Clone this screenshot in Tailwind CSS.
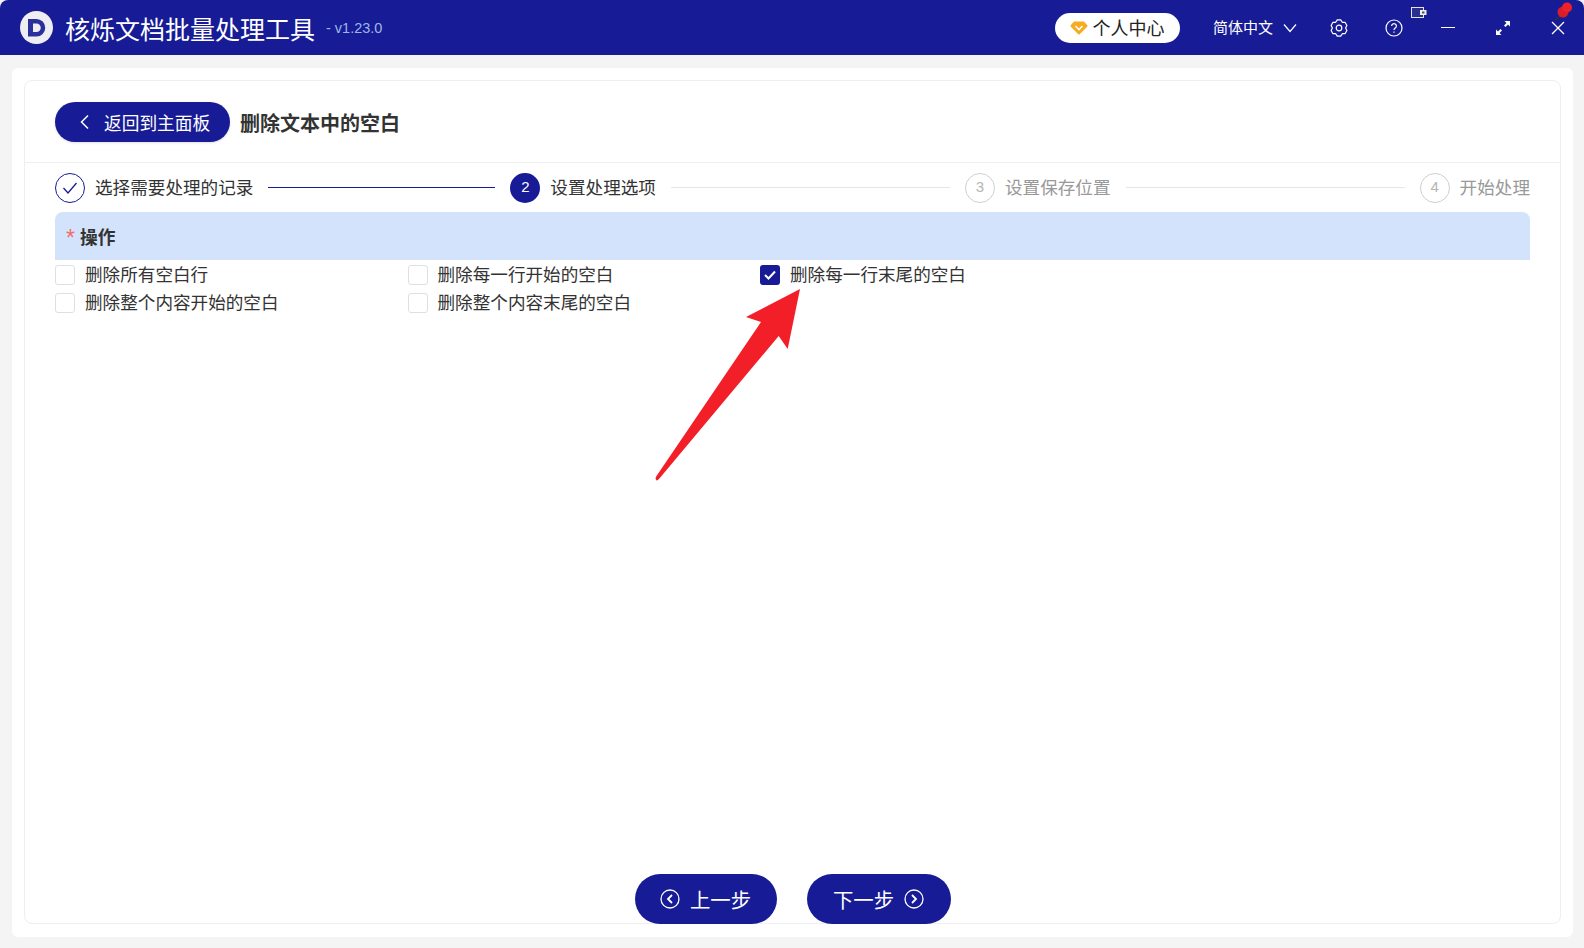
<!DOCTYPE html>
<html lang="zh-CN">
<head>
    <meta charset="UTF-8">
    <title>核烁文档批量处理工具</title>
    <script src="https://cdn.jsdelivr.net/npm/@tailwindcss/browser@4"></script>
</head>
<body class="bg-[#f4f4f4] font-['Noto_Sans_CJK_SC','Noto_Sans',sans-serif] text-[#333]">
<div class="relative flex flex-col w-[1584px] h-[948px] overflow-hidden">
    <!-- title bar -->
    <header class="flex items-center h-[55px] shrink-0 bg-[#171c96] text-white pl-[20px] rounded-tl-lg rounded-tr-lg">
        <svg class="w-[33px] h-[33px] mr-[12px]" viewBox="0 0 33 33">
            <circle cx="16.5" cy="16.5" r="16.500" fill="#eeeef2"/>
            <path d="M8 8h8.500a8.700 8.700 0 0 1 0 17.500H8z" fill="#2a2f9c"/>
            <path d="M13 12.500h3.500a4.200 4.200 0 0 1 0 8.500H13z" fill="#eeeef2"/>
        </svg>
        <span class="text-[25px] leading-none mt-[1px]">核烁文档批量处理工具</span>
        <span class="ml-[11px] mt-[3px] text-[14.500px] text-[#9db8e6] font-['Liberation_Sans',sans-serif]">- v1.23.0</span>
        <div class="flex items-center ml-auto">
            <button class="flex items-center justify-center w-[125px] h-[30px] mr-[33px] rounded-full bg-white text-[#222] text-[18px]">
                <svg class="w-[18px] h-[14px] mr-[4px]" viewBox="0 0 18 14"><path d="M4.500 1.500h9l3 3.500L9 12.500 1.500 5z" fill="#f7ab1e" stroke="#f7ab1e" stroke-width="2" stroke-linejoin="round"/><path d="M5.500 5L9 8.500 12.500 5" fill="none" stroke="#fff" stroke-width="1.600"/></svg>
                个人中心
            </button>
            <span class="text-[15px]">简体中文</span>
            <svg class="w-[14px] h-[10px] ml-[10px] mr-[33px]" viewBox="0 0 14 10" fill="none" stroke="#fff" stroke-width="1.200"><path d="M1 1.500l6 7 6-7"/></svg>
            <svg class="w-[18px] h-[18px] mr-[37px]" viewBox="0 0 18 18" fill="none" stroke="#fff" stroke-width="1.200" stroke-linejoin="round"><path d="M7.270 .88L10.730 .88 12.300 3.280 15.170 3.450 16.890 6.440 15.600 9 16.890 11.560 15.170 14.550 12.300 14.720 10.730 17.120 7.270 17.120 5.700 14.720 2.830 14.550 1.110 11.560 2.400 9 1.110 6.440 2.830 3.450 5.700 3.280z"/><circle cx="9" cy="9" r="2.800"/></svg>
            <svg class="w-[18px] h-[18px] mr-[38px]" viewBox="0 0 18 18" fill="none" stroke="#fff" stroke-width="1.200"><circle cx="9" cy="9" r="8"/><path d="M6.600 7a2.400 2.400 0 1 1 3.600 2.100c-.8.500-1.200 1-1.200 1.900"/><path d="M9 12.600v1.200"/></svg>
            <span class="w-[14px] h-[1.500px] bg-white mr-[41px]"></span>
            <svg class="w-[14px] h-[14px] mr-[41px]" viewBox="0 0 14 14" fill="#fff"><path d="M8.500 0H14v5.500L12 3.500 9.500 6 8 4.500 10.500 2zM5.500 14H0V8.500L2 10.500 4.500 8 6 9.500 3.500 12z"/></svg>
            <svg class="w-[14px] h-[14px] mr-[19px]" viewBox="0 0 14 14" fill="none" stroke="#fff" stroke-width="1.300"><path d="M1 1l12 12M13 1L1 13"/></svg>
        </div>
    </header>

    <!-- small tray icons over the title bar -->
    <svg class="absolute left-[1411px] top-[7px] w-[16px] h-[11px]" viewBox="0 0 16 11"><rect x=".5" y=".5" width="12" height="10" fill="#2a2f8f" stroke="#e4e4e4"/><rect x="9" y="3" width="6.500" height="5" fill="#eee"/><rect x="11" y="4.500" width="2.500" height="2" fill="#555"/></svg>
    <svg class="absolute left-[1554px] top-[2px] w-[20px] h-[20px]" viewBox="0 0 20 20"><path d="M1 18l5-4" stroke="#333" stroke-width="1.500"/><circle cx="9" cy="10" r="5.500" fill="#d81e28"/><circle cx="13" cy="5.500" r="5" fill="#f0202a"/></svg>

    <!-- main -->
    <main class="flex flex-col flex-1 mt-[13px] ml-[12px] mr-[11px] mb-[11px] bg-white rounded-md p-[12px] pb-[13px]">
        <div class="relative flex flex-col flex-1 border border-[#efefef] rounded-lg">
            <div class="flex items-center h-[82px] shrink-0 pl-[30px] pt-[1px] border-b border-[#efefef]">
                <button class="flex items-center w-[175px] h-[40px] rounded-full bg-[#171c96] text-white text-[17.700px] pl-[24px] shadow-sm">
                    <svg class="w-[11px] h-[16px] mr-[14px]" viewBox="0 0 11 16" fill="none" stroke="#fff" stroke-width="1.500"><path d="M9 1.500L2.500 8 9 14.500"/></svg>
                    返回到主面板
                </button>
                <h1 class="ml-[10px] mt-[1px] text-[20px] font-bold text-[#333]">删除文本中的空白</h1>
            </div>

            <div class="flex flex-col flex-1 px-[30px]">
                <!-- steps -->
                <div class="flex items-center h-[49px] shrink-0 text-[17.600px]">
                    <span class="flex items-center justify-center w-[30px] h-[30px] rounded-full border border-[#171c96] shrink-0">
                        <svg class="w-[16px] h-[14px]" viewBox="0 0 16 14" fill="none" stroke="#171c96" stroke-width="1.300"><path d="M1.500 7l4.500 5L14.500 2"/></svg>
                    </span>
                    <span class="ml-[10px] mb-[1px] text-[#333] whitespace-nowrap">选择需要处理的记录</span>
                    <span class="h-px w-[227px] ml-[15px] mr-[15px] bg-[#171c96]"></span>
                    <span class="flex items-center justify-center w-[30px] h-[30px] rounded-full bg-[#171c96] text-white text-[15px] shrink-0 font-['Liberation_Sans',sans-serif]">2</span>
                    <span class="ml-[10px] mb-[1px] text-[#333] whitespace-nowrap">设置处理选项</span>
                    <span class="h-px flex-1 ml-[15px] mr-[15px] bg-[#e6e6e6]"></span>
                    <span class="flex items-center justify-center w-[30px] h-[30px] rounded-full border border-[#cfcfcf] text-[#b5b5b5] text-[15px] shrink-0 font-['Liberation_Sans',sans-serif]">3</span>
                    <span class="ml-[10px] mb-[1px] text-[#999] whitespace-nowrap">设置保存位置</span>
                    <span class="h-px flex-1 ml-[15px] mr-[15px] bg-[#e6e6e6]"></span>
                    <span class="flex items-center justify-center w-[30px] h-[30px] rounded-full border border-[#cfcfcf] text-[#b5b5b5] text-[15px] shrink-0 font-['Liberation_Sans',sans-serif]">4</span>
                    <span class="ml-[10px] mb-[1px] text-[#999] whitespace-nowrap">开始处理</span>
                </div>

                <!-- options -->
                <div class="flex items-center h-[48px] shrink-0 bg-[#d3e3fc] rounded-t-lg pl-[11px] text-[17.700px] font-bold text-[#333]">
                    <span class="text-[#f56c6c] text-[23px] font-normal font-['Liberation_Sans',sans-serif] mt-[5px] mr-[5px]">*</span><span class="mt-[1px]">操作</span>
                </div>
                <div class="grid grid-cols-[352.500px_352.500px_1fr] auto-rows-[28px] mt-[1px] text-[17.600px] text-[#333]">
                    <label class="flex items-center"><span class="w-[20px] h-[20px] mr-[10px] border border-[#dcdfe6] rounded-[3px]"></span><span class="mb-[2px]">删除所有空白行</span></label>
                    <label class="flex items-center"><span class="w-[20px] h-[20px] mr-[10px] border border-[#dcdfe6] rounded-[3px]"></span><span class="mb-[2px]">删除每一行开始的空白</span></label>
                    <label class="flex items-center"><span class="flex items-center justify-center w-[20px] h-[20px] mr-[10px] bg-[#171c96] rounded-[3px]"><svg class="w-[12px] h-[10px]" viewBox="0 0 12 10" fill="none" stroke="#fff" stroke-width="2"><path d="M1 5l3.500 3.500L11 1.500"/></svg></span><span class="mb-[2px]">删除每一行末尾的空白</span></label>
                    <label class="flex items-center"><span class="w-[20px] h-[20px] mr-[10px] border border-[#dcdfe6] rounded-[3px]"></span><span class="mb-[2px]">删除整个内容开始的空白</span></label>
                    <label class="flex items-center"><span class="w-[20px] h-[20px] mr-[10px] border border-[#dcdfe6] rounded-[3px]"></span><span class="mb-[2px]">删除整个内容末尾的空白</span></label>
                </div>

                <!-- bottom buttons -->
                <div class="flex justify-center gap-[30px] mt-auto -mb-px text-[20.400px] text-white">
                    <button class="flex items-center justify-center w-[142px] h-[50px] rounded-full bg-[#171c96]">
                        <svg class="w-[20px] h-[20px] mr-[10px]" viewBox="0 0 20 20" fill="none" stroke="#fff"><circle cx="10" cy="10" r="9" stroke-width="1.300"/><path d="M12 6l-4 4 4 4" stroke-width="1.800"/></svg>
                        上一步
                    </button>
                    <button class="flex items-center justify-center w-[144px] h-[50px] rounded-full bg-[#171c96]">
                        下一步
                        <svg class="w-[20px] h-[20px] ml-[10px]" viewBox="0 0 20 20" fill="none" stroke="#fff"><circle cx="10" cy="10" r="9" stroke-width="1.300"/><path d="M8 6l4 4-4 4" stroke-width="1.800"/></svg>
                    </button>
                </div>
            </div>
        </div>
    </main>

    <!-- red annotation arrow -->
    <svg class="absolute left-[650px] top-[285px] w-[160px] h-[200px] pointer-events-none" viewBox="0 0 160 200">
        <path d="M150 4L137.700 64 128.700 51 9 194Q6.500 196.500 6 194.500 5 193 6.500 191L111 37 96 32z" fill="#f21f29"/>
    </svg>
</div>
</body>
</html>
